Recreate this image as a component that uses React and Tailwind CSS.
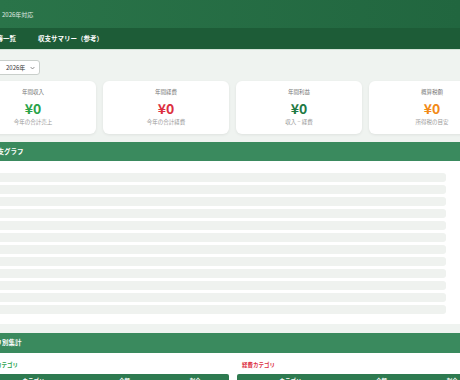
import React from "react";

const cards = [
  { label: "年間収入", value: "¥0", sub: "今年の合計売上", color: "text-[#2aa34a]" },
  { label: "年間経費", value: "¥0", sub: "今年の合計経費", color: "text-[#dc2f3f]" },
  { label: "年間利益", value: "¥0", sub: "収入 − 経費", color: "text-[#1f7a45]" },
  { label: "概算税額", value: "¥0", sub: "所得税の目安", color: "text-[#f28a17]" },
];

function TableHead() {
  return (
    <div className="grid grid-cols-[43%_30%_27%] h-[14px] bg-[#2e7a50] text-white text-[5.5px] font-bold items-center text-center rounded-t-[2px]">
      <div>カテゴリ</div>
      <div>金額</div>
      <div>割合</div>
    </div>
  );
}

export default function App() {
  return (
    <div className="w-[460px] h-[380px] overflow-hidden bg-[#eff3f0] font-['Noto_Sans_CJK_JP','Noto_Sans',sans-serif]">
      <div className="h-[28px] bg-linear-to-r from-[#2a7449] to-[#21663f] flex items-center pl-[2px]">
        <span className="text-[6px] text-white/85">2026年対応</span>
      </div>
      <div className="h-[21px] bg-[#1d5c37] flex items-center gap-[22px] -ml-[10px] text-white text-[6.5px] font-bold">
        <span>帳簿一覧</span>
        <span>収支サマリー（参考）</span>
      </div>
      <div className="h-[1px] bg-[#d3e4d8]" />

      <div className="pt-[10px] flex">
        <div className="-ml-[6px] w-[46px] h-[15px] bg-white border border-[#c9cfcb] rounded-[3px] flex items-center justify-between pl-[11px] pr-[4px] text-[6px] text-[#333]">
          <span>2026年</span>
          <svg width="5" height="4" viewBox="0 0 5 4" fill="none">
            <path d="M0.6 1 L2.5 3 L4.4 1" stroke="#666" strokeWidth="0.7" />
          </svg>
        </div>
      </div>

      <div className="mt-[6px] -ml-[30px] flex gap-[7px]">
        {cards.map((c) => (
          <div
            key={c.label}
            className="w-[126px] h-[53px] shrink-0 bg-white rounded-[6px] shadow-[0_1px_3px_rgba(0,0,0,0.07)] flex flex-col items-center pt-[8px]"
          >
            <div className="text-[5.5px] leading-[7px] text-[#777]">{c.label}</div>
            <div className={`text-[14px] leading-[14px] font-bold mt-[5px] ${c.color}`}>{c.value}</div>
            <div className="text-[5.5px] leading-[7px] text-[#999] mt-[4px]">{c.sub}</div>
          </div>
        ))}
      </div>

      <div className="mt-[8px] -ml-[40px] w-[540px]">
        <div className="h-[19px] bg-[#3a8a5e] flex items-center pl-[18px] text-white text-[6.5px] font-bold">
          月別収支グラフ
        </div>
        <div className="bg-white pt-[12px] pb-[10px] pl-[10px]">
          <div className="w-[476px] flex flex-col gap-[3px]">
            {Array.from({ length: 12 }).map((_, i) => (
              <div key={i} className="h-[9px] rounded-[3px] bg-[#eff2ef]" />
            ))}
          </div>
        </div>
      </div>

      <div className="mt-[9px] -ml-[40px] w-[540px]">
        <div className="h-[20px] bg-[#3a8a5e] flex items-center pl-[16px] text-white text-[6.5px] font-bold">
          カテゴリ別集計
        </div>
        <div className="bg-white pt-[8px] pl-[20px] flex gap-[8px]">
          <div className="w-[249px]">
            <div className="pl-[5px] h-[13px] text-[5.5px] font-bold text-[#2aa34a]">収入カテゴリ</div>
            <TableHead />
          </div>
          <div className="w-[249px]">
            <div className="pl-[5px] h-[13px] text-[5.5px] font-bold text-[#dc2f3f]">経費カテゴリ</div>
            <TableHead />
          </div>
        </div>
      </div>
    </div>
  );
}
